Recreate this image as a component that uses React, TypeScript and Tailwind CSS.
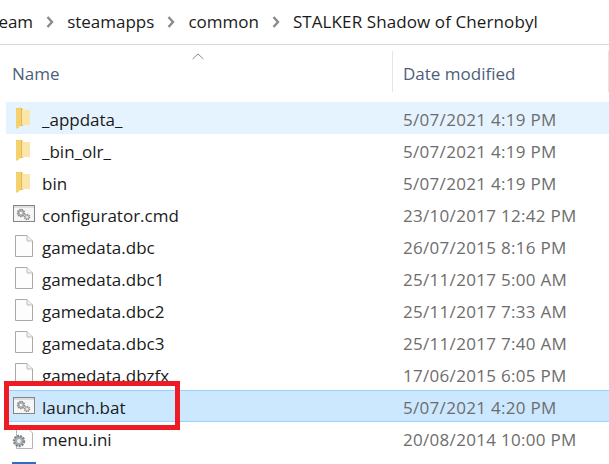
import React from 'react';

type Kind = 'folder' | 'cmd' | 'file' | 'ini';

type Row = { name: string; date: string; kind: Kind; state?: 'hover' | 'selected' };

const rows: Row[] = [
  { name: '_appdata_', date: '5/07/2021 4:19 PM', kind: 'folder', state: 'hover' },
  { name: '_bin_olr_', date: '5/07/2021 4:19 PM', kind: 'folder' },
  { name: 'bin', date: '5/07/2021 4:19 PM', kind: 'folder' },
  { name: 'configurator.cmd', date: '23/10/2017 12:42 PM', kind: 'cmd' },
  { name: 'gamedata.dbc', date: '26/07/2015 8:16 PM', kind: 'file' },
  { name: 'gamedata.dbc1', date: '25/11/2017 5:00 AM', kind: 'file' },
  { name: 'gamedata.dbc2', date: '25/11/2017 7:33 AM', kind: 'file' },
  { name: 'gamedata.dbc3', date: '25/11/2017 7:40 AM', kind: 'file' },
  { name: 'gamedata.dbzfx', date: '17/06/2015 6:05 PM', kind: 'file' },
  { name: 'launch.bat', date: '5/07/2021 4:20 PM', kind: 'cmd', state: 'selected' },
  { name: 'menu.ini', date: '20/08/2014 10:00 PM', kind: 'ini' },
];

const FolderIcon = () => (
  <svg width="14" height="22" viewBox="0 0 14 22" className="ml-[10px]">
    <path d="M0 1 H6 L7 3 V19 H0 Z" fill="#e3bb52" />
    <path d="M6 3 H14 V18 H6 Z" fill="#fbe6a8" />
    <path d="M0 1.5 L5 0.5 V18.5 L1.5 21.5 H0 Z" fill="#f3d16f" />
  </svg>
);

const CmdIcon = () => (
  <svg width="22" height="18" viewBox="0 0 22 18" className="ml-[7px]">
    <rect x="0.5" y="0.5" width="21" height="16" fill="#f6f6f6" stroke="#858585" />
    <rect x="1" y="1" width="20" height="2" fill="#dedede" />
    <circle cx="8" cy="8" r="3.4" fill="#b5b5b5" stroke="#8a8a8a" strokeWidth="1.6" strokeDasharray="1.5 0.8" />
    <circle cx="8" cy="8" r="1.2" fill="#f4f4f4" />
    <circle cx="14" cy="12" r="2.5" fill="#c4c4c4" stroke="#8a8a8a" strokeWidth="1.4" strokeDasharray="1.2 0.7" />
    <circle cx="14" cy="12" r="0.9" fill="#f4f4f4" />
  </svg>
);

const FileIcon = () => (
  <svg width="18" height="22" viewBox="0 0 18 22" className="ml-[9px]">
    <path d="M0.5 0.5 H12 L17.5 6 V21.5 H0.5 Z" fill="#fdfdfd" stroke="#a9a9a9" />
    <path d="M12 0.5 V6 H17.5" fill="#f0f0f0" stroke="#bdbdbd" />
  </svg>
);

const IniIcon = () => (
  <svg width="21" height="22" viewBox="0 0 21 22" className="ml-[6px]">
    <path d="M4.5 0.5 H15 L20.5 6 V21.5 H4.5 Z" fill="#fdfdfd" stroke="#b5b5b5" />
    <circle cx="7" cy="14" r="5" fill="#a9b0b6" stroke="#7d858c" strokeWidth="2.4" strokeDasharray="2 1" />
    <circle cx="7" cy="14" r="2" fill="#eef0f2" />
  </svg>
);

const icons: Record<Kind, React.ReactNode> = {
  folder: <FolderIcon />,
  cmd: <CmdIcon />,
  file: <FileIcon />,
  ini: <IniIcon />,
};

const Chevron = () => (
  <svg width="8" height="12" viewBox="0 0 8 12" className="shrink-0">
    <path d="M1.5 1 L6 6 L1.5 11" fill="none" stroke="#8a8a8a" strokeWidth="2.4" />
  </svg>
);

export default function App() {
  return (
    <div className="relative h-[464px] w-[609px] overflow-hidden bg-white font-['Open_Sans',sans-serif] text-[17px]">
      {/* Address bar */}
      <div className="-ml-[17px] flex h-[45px] items-center gap-[13px] overflow-hidden whitespace-nowrap border-b border-[#d9d9d9] pb-[1px] text-[#1a1a1a]">
        <span>Steam</span>
        <Chevron />
        <span>steamapps</span>
        <Chevron />
        <span>common</span>
        <Chevron />
        <span className="tracking-[0.1px]">STALKER Shadow of Chernobyl</span>
      </div>

      {/* Column headers */}
      <div className="relative flex h-[57px] items-center text-[#4c607a]">
        <span className="w-[392px] pl-[12px] pt-[1px]">Name</span>
        <span className="h-[41px] w-[1px] -translate-y-[2px] bg-[#e5e5e5]" />
        <span className="w-[215px] pl-[10px] pt-[1px]">Date modified</span>
        <span className="h-[41px] w-[1px] -translate-y-[2px] bg-[#e5e5e5]" />
        <svg width="12" height="7" viewBox="0 0 12 7" className="absolute left-[192px] top-[8px]">
          <path d="M0.5 6 L6 1 L11.5 6" fill="none" stroke="#8c8c8c" />
        </svg>
      </div>

      {/* File rows */}
      <div className="ml-[6px] flex flex-col">
        {rows.map((row) => (
          <div
            key={row.name}
            className={
              row.state === 'selected'
                ? 'flex h-[32px] items-center border-y border-[#99d1ff] bg-[#cce8ff]'
                : row.state === 'hover'
                  ? 'flex h-[32px] items-center bg-[#e5f3ff]'
                  : 'flex h-[32px] items-center'
            }
          >
            <span className="flex w-[36px] items-center">{icons[row.kind]}</span>
            <span className="w-[361px] pt-[3px] text-[#1a1a1a]">{row.name}</span>
            <span className="pt-[3px] tracking-[0.3px] text-[#6d6d6d]">{row.date}</span>
          </div>
        ))}
        <div className="flex h-[32px] pl-[6px] pt-[8px]">
          <span className="h-[6px] w-[24px] bg-[#2a6fc0]" />
        </div>
      </div>

      {/* Red highlight box */}
      <div className="absolute left-[4px] top-[381px] h-[49px] w-[176px] border-[5px] border-[#ed1c24]" />
    </div>
  );
}
